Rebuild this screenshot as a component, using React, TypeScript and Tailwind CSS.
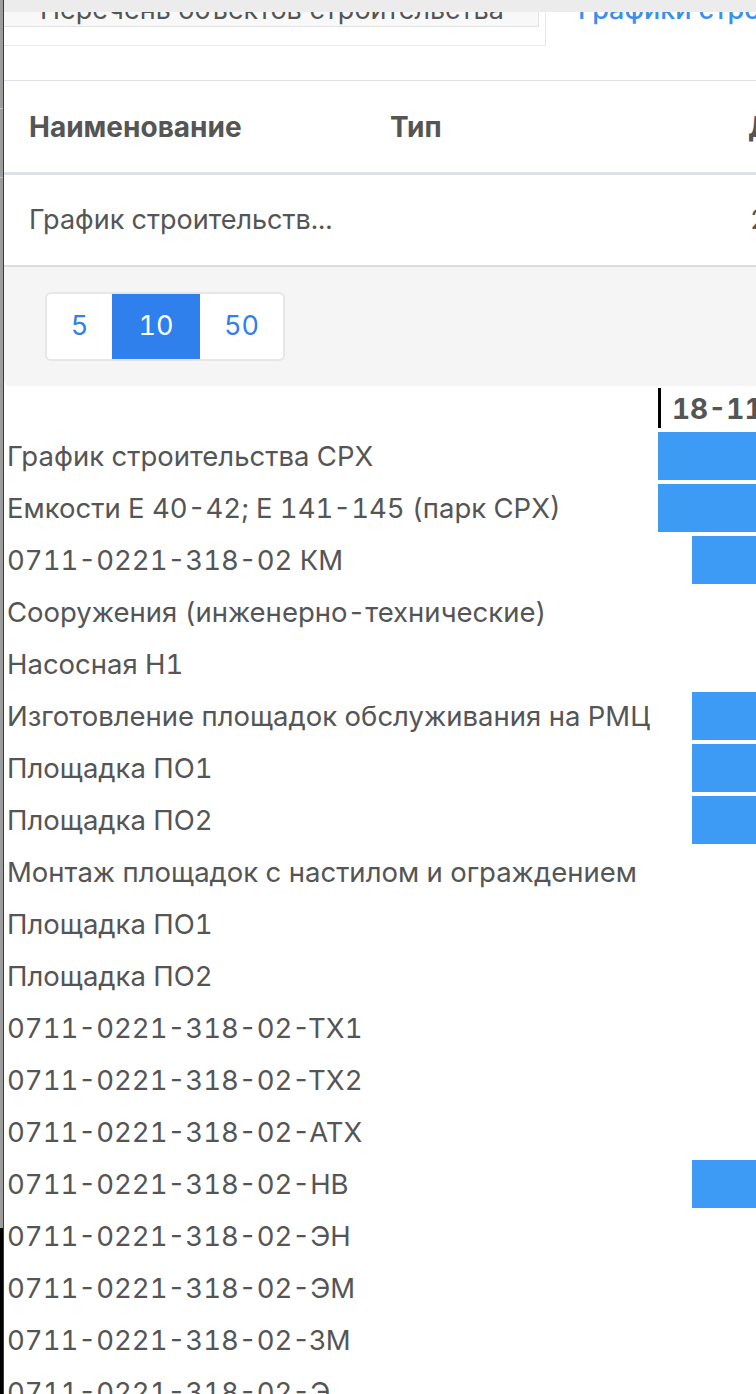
import React from 'react'

interface GanttRow {
  name: string
  bar?: 'full' | 'late'
}

const rows: GanttRow[] = [
  { name: 'График строительства СРХ', bar: 'full' },
  { name: 'Емкости Е 40-42; Е 141-145 (парк СРХ)', bar: 'full' },
  { name: '0711-0221-318-02 КМ', bar: 'late' },
  { name: 'Сооружения (инженерно-технические)' },
  { name: 'Насосная Н1' },
  { name: 'Изготовление площадок обслуживания на РМЦ', bar: 'late' },
  { name: 'Площадка ПО1', bar: 'late' },
  { name: 'Площадка ПО2', bar: 'late' },
  { name: 'Монтаж площадок с настилом и ограждением' },
  { name: 'Площадка ПО1' },
  { name: 'Площадка ПО2' },
  { name: '0711-0221-318-02-ТХ1' },
  { name: '0711-0221-318-02-ТХ2' },
  { name: '0711-0221-318-02-АТХ' },
  { name: '0711-0221-318-02-НВ', bar: 'late' },
  { name: '0711-0221-318-02-ЭН' },
  { name: '0711-0221-318-02-ЭМ' },
  { name: '0711-0221-318-02-ЗМ' },
  { name: '0711-0221-318-02-Э' },
  { name: '0711-0221-318-02-ЭС' },
]

function Tabs() {
  return (
    <div className="flex h-[34px] overflow-hidden">
      <div className="w-[542px] shrink-0 border-r border-b border-[#e8e8e8]">
        <div className="h-full w-[535px] border-r border-b border-[#e2e2e2] bg-[#f8f8f8] pl-[36px]">
          <div className="-mt-[18px] whitespace-nowrap text-[27px] leading-[32px] text-[#555]">
            Перечень объектов строительства
          </div>
        </div>
      </div>
      <div className="pl-[32px]">
        <div className="-mt-[18px] whitespace-nowrap text-[27px] leading-[32px] font-medium text-[#3b8eea]">
          Графики строительства
        </div>
      </div>
    </div>
  )
}

function SchedulesTable() {
  return (
    <div className="border-t border-[#dee2e6]">
      <div className="grid h-[94px] grid-cols-[361px_358px_1fr] items-center border-b-[3px] border-[#dee2e6] pl-[25px] text-[28px] font-bold text-[#555]">
        <div>Наименование</div>
        <div>Тип</div>
        <div className="whitespace-nowrap">Дата</div>
      </div>
      <div className="grid h-[92px] grid-cols-[719px_1fr] items-center border-b-2 border-[#dcdcdc] pl-[25px] text-[27px] text-[#555] tabular-nums">
        <div>График строительств...</div>
        <div className="pl-[2px] whitespace-nowrap">2018</div>
      </div>
      <div className="h-[119px] rounded-bl-md bg-[#f5f5f5] pl-[41px] pt-[25px]">
        <div className="flex h-[69px] w-[240px] overflow-hidden rounded-md border-2 border-[#e6e6e6] bg-white text-[27px] tabular-nums">
          <div className="flex w-[65px] items-center justify-center text-[#2f80ed]">5</div>
          <div className="flex w-[88px] items-center justify-center bg-[#2f80ed] text-white">10</div>
          <div className="flex flex-1 items-center justify-center text-[#2f80ed]">50</div>
        </div>
      </div>
    </div>
  )
}

function Gantt() {
  return (
    <div className="bg-white">
      <div className="flex h-[45px]">
        <div className="w-[654px] shrink-0" />
        <div className="flex items-center">
          <div className="mt-[2px] h-[40px] w-[3px] self-start bg-black" />
          <div className="pl-[11px] text-[28px] font-bold whitespace-nowrap text-[#555] tabular-nums">18-11</div>
        </div>
      </div>
      {rows.map((row, i) => (
        <div key={i} className="flex h-[52px]">
          <div className="flex w-[654px] shrink-0 items-center pl-[3px] text-[27.5px] whitespace-nowrap text-[#555] tabular-nums">
            {row.name}
          </div>
          <div className="flex-1 pt-[1px]">
            {row.bar === 'full' && <div className="h-[48px] w-full bg-[#3d9af5]" />}
            {row.bar === 'late' && <div className="ml-[34px] h-[48px] bg-[#3d9af5]" />}
          </div>
        </div>
      ))}
    </div>
  )
}

export default function App() {
  return (
    <div className="flex h-[1394px] w-[756px] overflow-hidden bg-white font-['Inter',sans-serif]">
      <div className="flex w-[4px] shrink-0 flex-col border-r border-[#3a3a3a]">
        <div className="h-[1228px] bg-[#9d9d9d]">
          <div className="mt-[108px] h-[1px] bg-[#c4c4c4]" />
          <div className="mt-[68px] h-[1px] bg-[#c4c4c4]" />
        </div>
        <div className="flex-1 bg-black" />
      </div>
      <div className="min-w-0 flex-1">
        <div className="h-[12px] bg-[#ececec]" />
        <Tabs />
        <div className="h-[34px]" />
        <SchedulesTable />
        <Gantt />
      </div>
    </div>
  )
}
